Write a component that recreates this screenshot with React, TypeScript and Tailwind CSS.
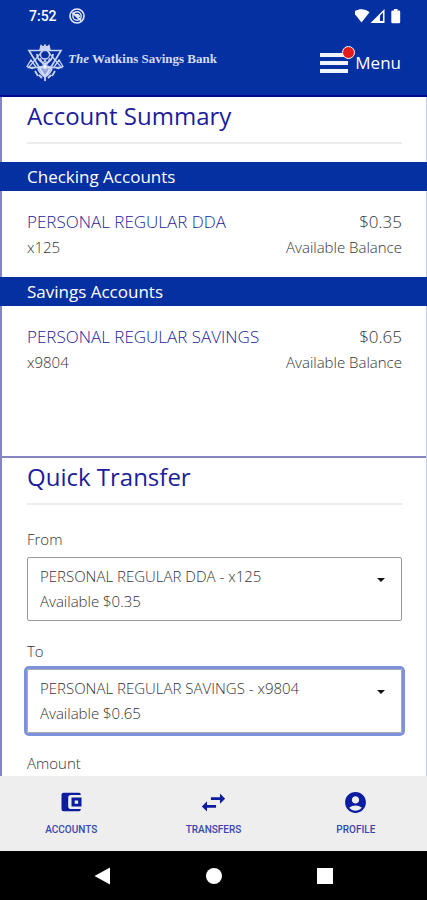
import { useState } from 'react'
import type { ReactNode } from 'react'
import { MdAccountCircle, MdSwapHoriz } from 'react-icons/md'

type Account = {
  id: string
  name: string
  mask: string
  balance: string
}

const CHECKING: Account = { id: 'dda', name: 'PERSONAL REGULAR DDA', mask: 'x125', balance: '$0.35' }
const SAVINGS: Account = { id: 'sav', name: 'PERSONAL REGULAR SAVINGS', mask: 'x9804', balance: '$0.65' }
const ACCOUNTS = [CHECKING, SAVINGS]

function WalletIcon({ size }: { size: number }) {
  return (
    <svg viewBox="0 0 24 24" width={size} height={size} fill="currentColor" fillRule="evenodd">
      <path d="M4.500 2.700H20q1.800 0 1.800 2V5H12q-2.800 0-2.800 2.800v8.400Q9.200 19 12 19h9.800v.3q0 2-1.800 2H4.500q-2 0-2-2V4.700q0-2 2-2z" />
      <path d="M12.500 7.500H22.500v9h-10zM15.700 10.400v3.400h3.400v-3.400z" />
    </svg>
  )
}

const TABS = [
  { label: 'ACCOUNTS', icon: WalletIcon, size: 24 },
  { label: 'TRANSFERS', icon: MdSwapHoriz, size: 31 },
  { label: 'PROFILE', icon: MdAccountCircle, size: 25 },
]

function StatusBar() {
  return (
    <div className="flex items-center h-8 pl-[29px] pr-6 text-white">
      <span className="font-[Roboto,sans-serif] text-sm font-medium">7:52</span>
      <svg viewBox="0 0 16 16" className="ml-3 size-4" fill="none" stroke="#e6ebfb">
        <circle cx="8" cy="8" r="7" strokeWidth="1.6" />
        <circle cx="8" cy="8" r="4.2" strokeWidth="1.4" />
        <path d="M3.5 4.5 12 12.5M6 7c2-1 4 0 4.500 2" strokeWidth="1.8" />
      </svg>
      <svg viewBox="0 0 48 16" className="ml-auto w-12 h-4" fill="#fff">
        <path d="M-1.500 4.200C3 .3 10 .3 14.500 4.200L6.500 14.500z" />
        <path fillRule="evenodd" d="M15.500 15 29.500 1v14zM21.500 13H25V7.500l3-3V13h-1z" />
        <path d="M39 1h3.500v1.500H44q1.200 0 1.200 1.200V14q0 1.200-1.200 1.200h-6.500q-1.200 0-1.200-1.200V3.700q0-1.200 1.200-1.200H39z" />
      </svg>
    </div>
  )
}

function BankLogo() {
  return (
    <svg viewBox="0 0 40 38" className="w-10 h-[38px] shrink-0" fill="none" stroke="#c9d3f5" strokeWidth="1.300">
      <path d="M4 6.500h32L20 33z" strokeWidth="1.700" />
      <path d="M20 4 36.500 23.500h-33z" />
      <path d="M2 22.500 6 16l5 7-4 1.500zM38 22.500 34 16l-5 7 4 1.500z" />
      <path d="M15 5.500 16 1.500l2.500 2L20 .8l1.500 2.700 2.500-2 1 4z" fill="#c9d3f5" />
      <circle cx="20" cy="10.500" r="4.500" />
      <path d="M12 10c0 5 3.500 8 8 10 4.500-2 8-5 8-10" strokeWidth="1.800" />
      <path d="M15 14l3 6 2-4 2 4 3-6" />
      <path d="M13 25c2-4 5-3 7 0 2-3 5-4 7 0-1 4-4 6-7 8-3-2-6-4-7-8z" fill="#dfe5fb" fillOpacity=".65" />
      <path d="M10 27l3 5M30 27l-3 5M14 31l3 3M26 31l-3 3M20 30v7" strokeWidth="1.800" />
      <circle cx="20" cy="22.500" r="2" fill="#fff" />
    </svg>
  )
}

function Header() {
  return (
    <header className="flex items-center pt-3 pb-[13px] pl-[25px] pr-[26px] text-white border-b-2 border-[#000b94]">
      <a href="#home" className="flex items-center">
        <BankLogo />
        <span className="ml-[3px] pb-2 font-['Liberation_Serif',serif] text-[13px] leading-4 font-bold text-[#d3dbf7]">
          <i>The</i> Watkins Savings Bank
        </span>
      </a>
      <button className="relative flex items-center gap-[7px] ml-auto text-[17px]">
        <span className="flex flex-col gap-1 w-7">
          <span className="h-1 bg-[#f1f3fd]" />
          <span className="h-1 bg-[#f1f3fd]" />
          <span className="h-1 bg-[#f1f3fd]" />
        </span>
        <span className="absolute -top-1 left-[22px] size-[13px] rounded-full border border-white bg-[#e31b1b]" />
        Menu
      </button>
    </header>
  )
}

function SectionTitle({ children }: { children: ReactNode }) {
  return (
    <h2 className="ml-[25px] mr-6 pt-[3px] pb-2.5 border-b-2 border-[#ececec] text-2xl leading-8 text-[#1c1c9c]">
      {children}
    </h2>
  )
}

function AccountGroup({ title, account }: { title: string; account: Account }) {
  return (
    <section className="-ml-0.5 -mr-px">
      <h3 className="pl-[27px] pr-[25px] bg-[#0530a2] text-[17px] leading-[29px] text-white">{title}</h3>
      <div className="flex justify-between pl-[25px] pr-6 pt-[18px] pb-[18px] border-l-2 border-r border-l-[#8585c2] border-r-[#c5cdec]">
        <div>
          <a href={`#${account.id}`} className="block text-[17px] leading-[26px] font-light text-[#1c1c9c]">
            {account.name}
          </a>
          <p className="text-[15px] leading-6 font-light text-[#333]">{account.mask}</p>
        </div>
        <div className="text-right text-[#333] font-light">
          <p className="text-[17px] leading-[26px]">{account.balance}</p>
          <p className="text-[15px] leading-6">Available Balance</p>
        </div>
      </div>
    </section>
  )
}

type SelectProps = {
  id: string
  label: string
  value: string
  active?: boolean
  onChange: (id: string) => void
}

function AccountSelect({ id, label, value, active, onChange }: SelectProps) {
  const selected = ACCOUNTS.find((a) => a.id === value) ?? CHECKING

  return (
    <div className="mb-5">
      <label htmlFor={id} className="block pb-2 text-[15px] leading-5 font-light text-[#333]">
        {label}
      </label>
      <div
        className={`relative rounded-xs border text-[15px] font-light text-[#333] ${
          active
            ? 'border-[#aaa] ring-3 ring-[#7c92dd]'
            : 'border-[#999]'
        }`}
      >
        <select
          id={id}
          value={value}
          onChange={(e) => onChange(e.target.value)}
          className="block w-full h-[62px] pl-3 pr-10 pt-0.5 pb-7 appearance-none bg-transparent outline-none"
        >
          {ACCOUNTS.map((a) => (
            <option key={a.id} value={a.id}>
              {a.name} - {a.mask}
            </option>
          ))}
        </select>
        <p className="absolute left-3 bottom-[9px] leading-5 pointer-events-none">Available {selected.balance}</p>
        <svg viewBox="0 0 8 4" className="absolute right-4 top-5 w-2 h-1 pointer-events-none" fill="#111">
          <path d="M0 0h8L4 4z" />
        </svg>
      </div>
    </div>
  )
}

function TabBar() {
  return (
    <nav className="grid grid-cols-3 h-[75px] bg-[#eeeeee]">
      {TABS.map(({ label, icon: Icon, size }) => (
        <button key={label} className="flex flex-col items-center gap-2 pt-3 text-[#0b1ca0]">
          <span className="flex items-center h-7">
            <Icon size={size} />
          </span>
          <span className="font-[Roboto,sans-serif] text-[10px] leading-3 font-medium text-[#3a47b0]">{label}</span>
        </button>
      ))}
    </nav>
  )
}

function SystemNav() {
  return (
    <div className="grid grid-cols-[1fr_auto_1fr] items-center h-[49px] px-[94px] bg-black">
      <svg viewBox="0 0 18 18" className="size-[18px]" fill="#fff">
        <path d="M.5 9 16 .5v17z" />
      </svg>
      <span className="size-4 rounded-full bg-white" />
      <span className="size-4 bg-white justify-self-end" />
    </div>
  )
}

export default function App() {
  const [from, setFrom] = useState('dda')
  const [to, setTo] = useState('sav')

  return (
    <div className="flex flex-col h-dvh bg-white font-['Open_Sans',sans-serif]">
      <div className="bg-[#0530a2]">
        <StatusBar />
        <Header />
      </div>

      <main className="flex-1 min-h-0 overflow-y-auto [scrollbar-width:none]">
        <div className="border-l-2 border-r border-l-[#8585c2] border-r-[#c5cdec]">
          <div className="pb-[18px]">
            <SectionTitle>Account Summary</SectionTitle>
          </div>
          <AccountGroup title="Checking Accounts" account={CHECKING} />
          <AccountGroup title="Savings Accounts" account={SAVINGS} />
          <section className="mt-16 border-t-2 border-[#8585c2]">
            <SectionTitle>Quick Transfer</SectionTitle>
            <form className="pl-[25px] pr-6 pt-6">
              <AccountSelect id="from" label="From" value={from} onChange={setFrom} />
              <AccountSelect id="to" label="To" value={to} onChange={setTo} active />
              <label htmlFor="amount" className="block pb-2 text-[15px] leading-5 font-light text-[#333]">
                Amount
              </label>
              <input id="amount" inputMode="decimal" className="block w-full h-12 mb-6 px-3 border border-[#999]" />
            </form>
          </section>
        </div>
      </main>

      <TabBar />
      <SystemNav />
    </div>
  )
}
